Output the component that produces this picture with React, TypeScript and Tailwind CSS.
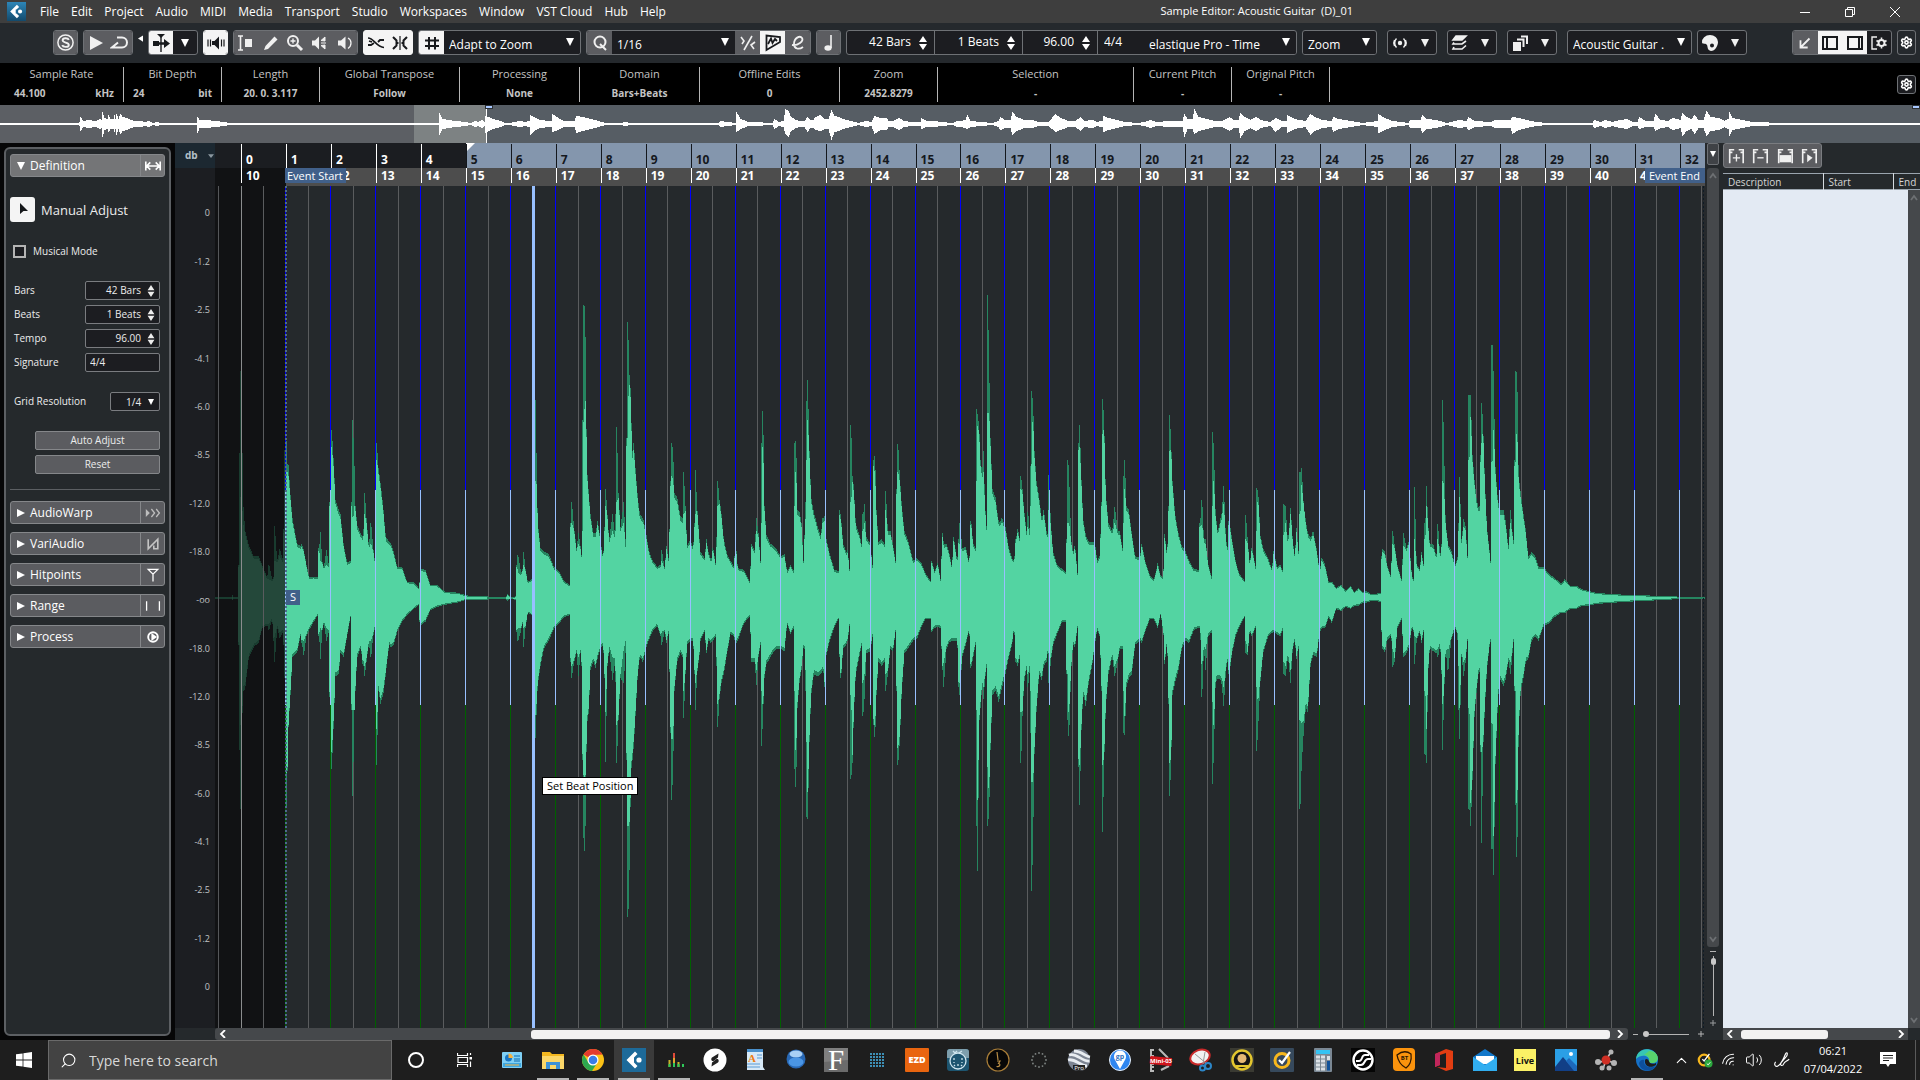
import React from "react";
import { Search, Wifi, Volume2, ChevronUp, Settings } from "lucide-react";

/* ------------------------------------------------------------------ */
/* Waveform data                                                       */
/* ------------------------------------------------------------------ */

type Segment = { origin: number; scale: number; data: string };

/* Each entry: column,top,bottom[,innerTop,innerBottom]; the axis sits at 779. */
const AXIS = 779;
const Y_SCALE = 2.376;

const segments: Segment[] = [
  {
    origin: -15,
    scale: 3,
    data: `45,777,781 94,777,781 96,773,784 98,777,781 115,777,781 116,700,890 118,435,1140,700,890 122,240,1280,540,1080 125,375,1080,560,1060 128,550,1000,600,990 134,620,995
145,655,920 160,680,895 175,680,885 185,700,850 200,730,845 206,700,855,735,840 215,735,830 220,730,880 223,608,930,690,870 230,690,850 238,662,875,680,860 248,690,860 251,615,890
254,428,970,620,890 257,388,1300,480,1200 261,460,1190,480,1180 264,462,1085,490,1080 270,535,1010 276,590,920 290,650,908 300,655,870 304,650,885 310,665,915,670,880 318,700,870 326,730,855 340,728,835 352,730,820
356,660,870 360,622,925,690,850 365,690,860 370,705,840 378,665,880,700,850 385,700,860 388,550,1015 394,380,1185,420,1145 400,460,1070 405,545,965 415,570,960 420,580,910 430,655,918 440,695,870 450,690,825
454,550,1045 457,355,1250,600,1045 462,465,1045,560,1045 465,560,1000 470,605,920 480,625,900 488,635,935 493,530,965,580,940 498,590,930 505,655,890 512,600,920,650,880 518,660,870 523,690,850
525,555,1060 529,410,1175,450,1090 534,470,1000 540,505,1030 548,560,1010 556,635,960 566,645,890 572,650,895 580,670,890 590,705,860 605,705,835 620,740,820 640,742,805 655,755,795 659,740,835 661,710,845
675,712,835 690,748,808 710,748,800 735,765,795 770,766,790 800,773,783 860,775,783 865,777,781 915,776,782 922,770,785 930,777,781 948,775,784 950,700,860 953,677,882,720,850 962,720,855 966,710,840
970,670,895,700,850 975,710,850 982,740,815 995,735,820 1000,735,820 1003,400,1000,600,900 1006,308,1112,500,1056 1009,498,1030 1012,600,985 1020,660,940 1030,668,900 1045,675,880 1060,705,852 1075,715,840 1090,738,825 1107,748,820
1110,600,930 1114,550,968,600,940 1120,605,935 1128,660,910 1134,625,965,650,920 1140,655,910 1145,690,940 1148,355,1165,620,1150 1151,82,1349,360,1200 1154,95,1380,330,1205 1157,290,1205 1159,465,1083 1165,530,1050 1170,580,950 1178,625,930 1185,625,945
1192,597,920 1200,640,900 1208,685,890 1212,610,970 1216,520,1168,560,1050 1220,570,950 1226,640,900 1236,580,975,620,920 1244,630,930 1249,372,1172,550,1080 1254,530,1070 1260,610,970 1270,550,980,600,900 1277,675,880
1280,400,1165 1283,124,1538,400,1320 1286,250,1478,300,1320 1289,250,1320 1292,340,1190 1296,430,1165 1300,410,1130 1305,470,1060 1312,540,960 1318,580,920 1328,590,930 1336,620,900 1345,665,880 1355,688,860 1370,705,845 1380,700,870
1384,665,890,690,860 1392,705,860 1399,655,885 1405,690,860 1410,500,1100 1414,410,1258,490,1115 1418,430,1190,500,1115 1422,530,1000 1430,540,930 1440,585,910 1446,590,920 1450,480,1065,580,1000 1455,560,960 1460,655,890 1470,640,880 1478,660,880 1482,600,960 1485,475,1045,580,980 1490,560,960 1497,640,915`,
  },
  {
    origin: 465,
    scale: 3,
    data: `22,665,880 30,625,880 38,690,865 42,510,1045,620,960 46,472,1010,545,960 52,635,920 60,670,880 72,683,860 78,640,910 84,670,880 92,690,885 98,660,880 106,700,870 112,500,1085,560,1030 117,545,1020 122,570,985 130,640,960
140,675,910 150,690,865 160,705,870 165,638,890 172,708,880 190,712,840 208,740,822 213,650,930 222,665,930 228,590,985,620,950 234,625,920 240,690,890 244,410,1130,600,1000 248,335,1050,420,1030 252,560,970 258,630,935
270,650,920 280,655,905 290,665,900 300,680,900 312,675,905 320,715,840 330,700,865 340,715,850 344,410,1185,560,1000 347,405,1228,480,1140 351,570,1040 357,575,980 363,600,950 370,705,890 374,630,900 378,310,1300,450,1120
382,262,1305,355,1240 387,430,1120 392,540,1010 400,575,960 412,610,965 420,630,960 428,590,950 433,585,990 438,640,915 448,675,880 462,712,848 474,715,830 478,570,920 482,590,968 488,650,900 497,670,890 502,665,880 508,720,840
512,367,1210,550,1010 516,490,1170 520,515,1060 526,605,960 536,625,920 544,655,890 548,580,1060,620,980 552,555,1020,600,960 558,635,910 570,650,905 577,710,865 580,450,1080 584,442,1110,490,1080 588,570,1010 594,645,930 604,640,940
612,650,930 616,525,1000,570,960 622,620,960 630,620,900 638,655,905 645,690,860 649,520,1000 653,412,1175,480,1135 658,490,1120 664,560,1000 672,620,910 682,640,900 690,665,890 698,690,880 710,685,875 722,695,850 735,720,830 750,738,830
754,690,860 762,715,850 772,695,848 780,735,850 786,625,950 790,650,990,660,930 798,650,900 806,670,885 814,705,880 820,635,880 830,690,880 836,640,990 839,600,1010,655,980 845,660,920 856,658,890 866,695,855 872,595,945 878,650,920 885,660,890
888,330,1320,500,1045 892,345,1428,370,1260 896,370,1080 900,450,1040 905,480,990 909,430,1020,480,990 914,560,970 919,620,940 922,58,1320,340,1180 926,225,1290,340,1230 930,400,1140 936,520,1010 945,540,1000 955,600,1025 965,590,990
975,610,960 985,660,920 995,685,890 1001,690,850 1006,640,930 1012,615,940 1018,640,920 1022,490,1170,520,1050 1026,520,1060 1031,570,980 1038,620,950 1043,575,990,610,960 1049,630,940 1051,465,1100,560,1000 1054,288,1475,460,1215
1058,320,1350,360,1215 1062,430,1150 1068,500,1050 1076,540,960 1084,590,975 1090,570,940 1098,620,930 1103,630,900 1106,487,980,570,910 1111,600,930 1118,670,890 1130,700,865 1145,710,835 1158,720,835 1160,640,960 1163,450,1070,600,960
1166,490,1108,600,1050 1172,640,950 1178,670,890 1184,655,895 1191,720,850 1195,410,1180 1198,367,1270,420,1175 1202,480,1110 1208,590,1010 1216,630,1035 1225,645,980 1235,645,940 1243,645,890 1250,690,855 1258,680,870 1263,550,1000
1267,305,1335,390,1175 1271,360,1170 1276,530,1040 1284,600,960 1295,620,920 1303,563,965,600,940 1312,620,930 1318,620,900 1326,660,900 1330,490,1100,600,1000 1333,450,1105,520,1060 1338,560,990 1345,570,970 1354,625,960 1364,680,890 1378,683,880
1384,650,885 1394,690,860 1408,725,830 1420,735,830 1432,697,850 1440,725,820 1448,730,850 1453,628,935 1460,680,880 1464,560,1030 1468,345,1250,430,1170 1472,410,1175 1476,500,1010 1484,580,980 1494,625,950 1504,655,900 1514,665,880 1526,690,885 1540,710,855 1555,712,850`,
  },
  {
    origin: 965,
    scale: 2.904,
    data: `57,600,850 63,545,1015,605,935 68,640,900 73,640,950,650,900 80,695,870 90,730,860 93,385,1220,560,1025 97,420,1150,500,1080 102,580,980 108,620,970 118,590,975 126,512,1035,555,990 132,640,950 138,665,925 142,595,960 150,640,910
160,690,870 170,720,850 186,738,825 190,582,910,640,880 195,640,915 201,695,860 208,660,870 218,705,850 222,518,1142,620,990 226,530,1080,550,1020 232,630,980 240,660,910 255,685,870 265,710,862 272,668,860 280,705,865 290,700,870 297,715,855
301,556,960,630,930 305,560,965,600,940 312,645,920 320,565,980,580,950 326,640,900 332,680,880 337,612,925 345,690,890 348,480,1280,580,1070 352,470,1175,510,1075 358,560,1095,560,1070 364,595,1040 370,625,1050 378,635,935 386,622,915
396,665,918 404,715,860 411,685,850 420,700,850 430,740,825 440,740,838 452,755,805 466,747,810 480,762,800 494,750,805 505,765,798 518,755,797 530,765,790 540,763,790 555,770,786 582,767,788 585,680,860 588,663,900 594,670,908 600,700,880
610,725,870 613,690,880 617,620,942,650,900 622,655,930 630,700,850 642,735,830 648,625,920,655,910 656,660,910 664,645,895 672,725,850 677,735,860 680,515,937,640,870 686,700,880 695,710,860 700,670,885 708,710,850 711,600,1150,640,1000
715,513,1170,560,1090 719,600,960 724,650,900 734,652,905 743,680,910 748,603,920,640,900 754,680,890 758,650,960 762,308,1140,500,1030 765,400,1020,510,1000 770,600,910 778,655,950,660,900 786,665,880 797,700,850 804,690,860
808,600,1045,620,940 811,492,1115,540,1040 816,640,920 823,592,965,610,930 828,610,930 836,710,860 839,297,1280,450,1040 843,297,1320,350,1265 848,440,1210 854,500,1055 860,545,1000 868,570,940 872,440,1145 875,315,1360,410,1145 879,370,1140
884,500,1040 890,610,950 898,670,890 904,725,870 906,178,1375,455,1075 910,262,1437,380,1345 914,460,1190 920,530,1060 926,570,970 938,570,988 945,600,970 952,660,930 959,570,960,600,930 965,630,900 970,660,860 972,450,1000
975,240,1270,455,1000 978,250,1395,390,1265 982,490,1100 988,530,1000 996,580,970 1003,620,930 1010,680,925 1020,670,880 1030,680,870 1040,705,880 1055,705,845 1070,722,840 1085,730,825 1105,745,815 1117,735,815 1132,750,805 1150,750,805
1165,758,798 1185,762,797 1210,767,793 1260,770,790 1320,772,787 1400,774,784 1440,775,782 1452,777,781 1523,777,781`,
  },
];

const CENTER = 412;

const columns = segments.flatMap((s) =>
  s.data.split(/\s+/).map((entry) => {
    const [c, top, bottom, it, ib] = entry.split(",").map(Number);
    const up = (AXIS - top) / Y_SCALE;
    const down = (bottom - AXIS) / Y_SCALE;
    return {
      x: s.origin + c / s.scale,
      up,
      down,
      innerUp: it ? (AXIS - it) / Y_SCALE : Math.max(0, up * 0.96 - 1),
      innerDown: ib ? (ib - AXIS) / Y_SCALE : Math.max(0, down * 0.96 - 1),
    };
  }),
);

type Peak = { x: number; a: number; b: number };

/* Resamples the envelope to one stepped column per unit, keeping every peak. */
const toPath = (pts: Peak[], mid: number) => {
  const first = Math.floor(pts[0].x);
  const last = Math.floor(pts[pts.length - 1].x);
  const cols: Peak[] = [];
  let i = 0;
  for (let x = first; x <= last; x++) {
    while (i < pts.length - 2 && pts[i + 1].x < x) i++;
    const p = pts[i];
    const q = pts[i + 1];
    const t = Math.min(1, Math.max(0, (x - p.x) / (q.x - p.x || 1)));
    let a = p.a + (q.a - p.a) * t;
    let b = p.b + (q.b - p.b) * t;
    for (let k = i; k < pts.length && pts[k].x < x + 1; k++) {
      if (pts[k].x >= x) {
        a = Math.max(a, pts[k].a);
        b = Math.max(b, pts[k].b);
      }
    }
    cols.push({ x, a: Math.round(a), b: Math.round(b) });
  }
  return (
    `M${first} ${mid}` +
    cols.map((c) => `V${mid - c.a}H${c.x + 1}`).join("") +
    [...cols].reverse().map((c) => `V${mid + c.b}H${c.x}`).join("") +
    "Z"
  );
};

const outerPath = toPath(columns.map((c) => ({ x: c.x, a: c.up, b: c.down })), CENTER);
const innerPath = toPath(columns.map((c) => ({ x: c.x, a: c.innerUp, b: c.innerDown })), CENTER);

const overviewData = `0,1 78,1 79,2 80,7,7 83,3 88,4 95,3 100,5 101,4 102,12,13 104,6 107,5 108,9,8 110,5 113,5 114,9,8 115,5 116,10,11 118,5 120,10,10 122,7 126,6 130,4 134,3 140,3 145,2 149,3 152,1 157,2 160,1
196,1 197,7,9 199,4 206,4 215,3 224,2 228,1 438,1 439,11,11 442,5 448,4 455,3 465,2 470,1 475,3 478,2 482,4 484,2 485,8,9 488,7 492,5 500,3 505,1 510,1 513,2 520,3 524,2 529,3 530,9,11 535,6 540,4 548,3 551,3 552,10,8 558,6 563,3
568,3 574,3 576,8,9 582,7 590,5 598,3 605,1 621,1 625,2 630,1 718,1 720,3 727,2 735,1 736,12,8 740,5 748,2 760,2 765,1 772,1 774,5 778,2 783,3 785,15,10 788,13,13 790,8 795,4 800,3 804,3 807,7,8 810,4 813,4 815,7,6 820,9,7 824,5
828,5 831,14,16 834,8 838,7 843,5 850,3 858,1 865,3 871,2 874,8,10 880,6 886,6 888,3 893,3 899,6 903,3 912,2 920,2 921,6,5 926,3 934,3 940,2 953,1 956,3 960,3 965,4 967,9,5 970,3 980,2 992,1 998,3 1000,7,6 1004,4 1010,4 1012,12,11
1016,7 1024,4 1032,4 1038,2 1048,2 1055,10,8 1060,6 1068,3 1075,3 1080,7,7 1084,3 1092,4 1096,2 1102,3 1103,8,8 1108,6 1116,4 1124,2 1138,1 1148,3 1150,4 1156,2 1170,3 1182,3 1184,10,13 1187,5 1192,5 1194,15,10 1198,7 1206,5 1214,3
1222,3 1229,7 1233,4 1238,4 1240,11,14 1244,7 1250,4 1256,7 1260,4 1270,2 1275,6,8 1281,3 1286,3 1287,9,9 1294,5 1305,3 1310,10,11 1314,7 1322,4 1331,3 1333,7,8 1338,5 1350,3 1362,1 1377,3 1378,10,9 1382,7 1392,3 1400,2 1408,1 1410,4
1420,4 1422,9,9 1426,5 1436,4 1446,1 1455,3 1458,4 1466,3 1468,7,6 1474,3 1490,2 1495,4 1500,4 1510,4 1512,7,10 1518,6 1530,3 1545,1 1592,1 1594,4 1600,2 1605,4 1612,2 1620,4 1627,5 1632,2 1637,2 1639,7,5 1645,3 1653,3 1655,10,7 1660,4
1668,3 1672,6,6 1680,4 1682,11,12 1686,7 1691,5 1694,9,10 1698,4 1703,4 1706,13,12 1710,7 1718,6 1724,3 1728,5 1729,12,12 1732,6 1742,4 1752,2 1765,2 1772,1 1920,1`;

const overviewPath = toPath(
  overviewData.split(/\s+/).map((e) => {
    const [x, a, b] = e.split(",").map(Number);
    return { x, a, b: b ?? a };
  }),
  19,
);

const barX = (n: number) => Math.floor(25.98 + 44.94 * n);
const bars = Array.from({ length: 32 }, (_, i) => i + 1);

/* ------------------------------------------------------------------ */
/* Small shared parts                                                  */
/* ------------------------------------------------------------------ */

const Down = ({ className = "" }: { className?: string }) => (
  <svg viewBox="0 0 8 8" className={`h-2 w-2 shrink-0 fill-current ${className}`} aria-hidden="true">
    <path d="M0 0H8L4 8Z" />
  </svg>
);

const Spin = ({ small = false }: { small?: boolean }) => (
  <svg viewBox="0 0 8 14" className={small ? "h-3 w-2 shrink-0 fill-current" : "h-[14px] w-2 shrink-0 fill-current"} aria-hidden="true">
    <path d="M4 0L8 6H0ZM0 8H8L4 14Z" />
  </svg>
);

const Ico = ({ children, className = "h-5 w-5", box = "0 0 20 20" }: { children: React.ReactNode; className?: string; box?: string }) => (
  <svg viewBox={box} className={`shrink-0 ${className}`} fill="none" stroke="currentColor" strokeWidth="1.6" aria-hidden="true">
    {children}
  </svg>
);

const ToolButton = ({ label, on = false, children }: { label: string; on?: boolean; children: React.ReactNode }) => (
  <button
    aria-label={label}
    className={on ? "flex h-full w-[25px] min-w-0 items-center justify-center bg-[#f4f4f4] text-[#17191c]" : "flex h-full w-[25px] min-w-0 items-center justify-center bg-[#5c5d61] text-[#f0f0f0]"}
  >
    {children}
  </button>
);

const group = "flex h-[25px] shrink-0 overflow-hidden rounded-[3px] border border-[#6e7175] bg-[#1c1d21]";
const groupOn = "flex h-[25px] shrink-0 overflow-hidden rounded-[3px] border border-[#f4f4f4] bg-[#f4f4f4]";

const Pick = ({ label, value, className = "" }: { label: string; value: string; className?: string }) => (
  <div className={`relative h-full ${className}`}>
    <select aria-label={label} className="h-full w-full appearance-none bg-[#1c1d21] pb-[2px] pl-[5px] pr-5 text-[12px] text-white outline-none">
      <option>{value}</option>
    </select>
    <Down className="pointer-events-none absolute right-[6px] top-[7px] text-white" />
  </div>
);

const IconMenu = ({ label, children }: { label: string; children: React.ReactNode }) => (
  <button aria-label={label} className="flex h-[25px] w-[50px] shrink-0 items-center justify-between rounded-[3px] border border-[#6e7175] bg-[#1c1d21] pl-[2px] pr-[7px] text-[#f0f0f0]">
    {children}
    <Down />
  </button>
);

const BarField = ({ label, value, className }: { label: string; value: string; className: string }) => (
  <div className={`flex h-full items-center border-r border-[#6e7175] pr-[7px] text-white ${className}`}>
    <input aria-label={label} defaultValue={value} className="h-full w-full min-w-0 bg-transparent pb-[2px] pr-2 text-right text-[12px] outline-none" />
    <Spin />
  </div>
);

/* ------------------------------------------------------------------ */
/* Title bar and toolbar                                               */
/* ------------------------------------------------------------------ */

const CubaseLogo = ({ className }: { className: string }) => (
  <svg viewBox="0 0 24 24" className={className} aria-hidden="true">
    <defs>
      <linearGradient id="cb" x1="0" y1="0" x2="0" y2="1">
        <stop offset="0" stopColor="#2d86b8" />
        <stop offset="1" stopColor="#134a6c" />
      </linearGradient>
    </defs>
    <rect width="24" height="24" fill="url(#cb)" />
    <path d="M12.500 3.500L4 12l8.500 8.500 2.800-2.800L12 14.500V9.500L15.300 6.300Z" fill="#fff" />
    <rect x="11" y="9.500" width="3" height="5" fill="#1f6a97" />
    <circle cx="16.500" cy="12" r="2.600" fill="#fff" />
  </svg>
);

const menus = ["File", "Edit", "Project", "Audio", "MIDI", "Media", "Transport", "Studio", "Workspaces", "Window", "VST Cloud", "Hub", "Help"];

const TitleBar = () => (
  <header className="flex h-[23px] items-center bg-[#3e3e3e] text-[12px] text-white">
    <CubaseLogo className="ml-[7px] h-[19px] w-[19px]" />
    <nav className="ml-[14px] flex gap-3">
      {menus.map((m) => (
        <button key={m} className="leading-[23px]">{m}</button>
      ))}
    </nav>
    <h1 className="ml-auto mr-[447px] whitespace-pre text-[11px]">Sample Editor: Acoustic Guitar  (D)_01</h1>
    <div className="flex gap-[35px] pr-5">
      <button aria-label="Minimize">
        <Ico className="h-[10px] w-[10px]" box="0 0 10 10"><path d="M0 5.500H10" strokeWidth="1" /></Ico>
      </button>
      <button aria-label="Restore">
        <Ico className="h-[10px] w-[10px]" box="0 0 10 10"><path d="M.5 2.500H7.500V9.500H.5ZM2.500 2.500V.5H9.500V7.500H7.500" strokeWidth="1" /></Ico>
      </button>
      <button aria-label="Close">
        <Ico className="h-[10px] w-[10px]" box="0 0 10 10"><path d="M0 0L10 10M10 0L0 10" strokeWidth="1" /></Ico>
      </button>
    </div>
  </header>
);

const Toolbar = () => (
  <div className="flex h-10 items-start gap-[5px] bg-[#25292d] pl-[53px] pr-1 pt-[7px]">
    <div className={`${group} w-[25px]`}>
      <ToolButton label="Solo editor">
        <Ico className="h-[19px] w-[19px]">
          <circle cx="10" cy="10" r="8" />
          <path d="M13.500 7.300C12.500 4.900 7 5 7 7.700C7 10.600 13.500 9.500 13.500 12.500C13.500 15.200 7.500 15.300 6.500 12.800" strokeWidth="2" />
        </Ico>
      </ToolButton>
    </div>
    <div className={`${group} w-[50px]`}>
      <ToolButton label="Audition"><Ico><path d="M4 3L17 10L4 17Z" fill="currentColor" stroke="none" /></Ico></ToolButton>
      <ToolButton label="Audition loop"><Ico><path d="M7 4.500H12A5 5 0 0 1 12 14.500H2L8 9.500" strokeWidth="2" /></Ico></ToolButton>
    </div>
    <svg viewBox="0 0 8 10" className="mt-1 h-[9px] w-[5px] fill-white" aria-hidden="true"><path d="M8 0V10L0 5Z" /></svg>
    <div className={`${group} w-[50px]`}>
      <ToolButton label="Auto-scroll" on>
        <Ico><path d="M10 1V19" strokeWidth="1.400" /><path d="M6 1H14L10 5ZM13 6L19 10.500L13 15ZM2 8H8V13H2Z" fill="currentColor" stroke="none" /><path d="M8 10.500H13" strokeWidth="2.500" /></Ico>
      </ToolButton>
      <button aria-label="Auto-scroll options" className="flex w-6 items-center justify-center text-white"><Down /></button>
    </div>
    <div className={`${groupOn} w-[25px]`}>
      <ToolButton label="Acoustic feedback" on>
        <Ico><path d="M2 6.500V13.500M4.500 6.500V13.500M15.500 6.500V13.500M18 6.500V13.500" strokeWidth="1.200" /><path d="M6 8H8.500L13 3.500V16.500L8.500 12H6Z" fill="currentColor" stroke="none" /></Ico>
      </ToolButton>
    </div>
    <div className={`${group} w-[125px]`}>
      <ToolButton label="Range selection"><Ico><path d="M2 3H7M4.500 3V17M2 17H7" /><path d="M9 6H16V14H9Z" fill="currentColor" stroke="none" /></Ico></ToolButton>
      <ToolButton label="Draw"><Ico><path d="M3 17L4.500 13L13.500 3.500L16.500 6.500L7 16Z" fill="currentColor" stroke="none" /></Ico></ToolButton>
      <ToolButton label="Zoom tool"><Ico><circle cx="8" cy="8" r="5" strokeWidth="2" /><path d="M8 5.500V10.500M5.500 8H10.500" strokeWidth="1.400" /><path d="M12 12L17 17" strokeWidth="3" /></Ico></ToolButton>
      <ToolButton label="Scrub"><Ico><path d="M2 7.500H5L9 3.500V16.500L5 12.500H2Z" fill="currentColor" stroke="none" /><path d="M11 10H16M15 4L11 7.500L15 8ZM15 12L11 12.500L15 16Z" fill="currentColor" strokeWidth="1" /></Ico></ToolButton>
      <ToolButton label="Play tool"><Ico><path d="M3 7.500H6L10.500 3.500V16.500L6 12.500H3Z" fill="currentColor" stroke="none" /><path d="M13 5C17 7 17 13 13 15.500" strokeWidth="1.300" /></Ico></ToolButton>
    </div>
    <div className={`${groupOn} w-[50px]`}>
      <ToolButton label="Snap to zero crossing" on><Ico><path d="M2 5C8 5 10 14 18 14.500" strokeWidth="1.600" /><path d="M2 12H5L8 10M12 9L14 7H18M3 8L6 9" strokeWidth="1.800" /></Ico></ToolButton>
      <ToolButton label="Snap" on><Ico><path d="M10 3V17" strokeWidth="1.200" /><path d="M3 4L6.500 7.500V12.500L3 16M17 4L13.500 7.500V12.500L17 16M6 10H8.500M11.500 10H14" strokeWidth="2" /></Ico></ToolButton>
    </div>
    <div className={`${group} w-[163px]`}>
      <ToolButton label="Grid" on><Ico><path d="M7 4V16.500M13 4V16.500M3 7.500H17M3 13H17" strokeWidth="2" /></Ico></ToolButton>
      <Pick label="Grid type" value="Adapt to Zoom" className="flex-1" />
    </div>
    <div className={`${group} w-[225px]`}>
      <ToolButton label="Apply quantize"><Ico><circle cx="10" cy="9" r="5.500" strokeWidth="2" /><path d="M10 11L16 17" strokeWidth="2" /></Ico></ToolButton>
      <Pick label="Quantize preset" value="1/16" className="flex-1" />
      <ToolButton label="Iterative quantize"><Ico><path d="M14 3L6 17" /><path d="M3 4L6 8L4 11M17 9L13 12L16 16" /></Ico></ToolButton>
      <ToolButton label="Audio warp quantize" on><Ico><path d="M3.500 2.500V17L17 9V4Z" strokeWidth="1.800" /><path d="M5 11L8 5.500L9.500 10L12 6L14 8" strokeWidth="1.800" /></Ico></ToolButton>
      <ToolButton label="Quantize panel"><Ico><path d="M4 12C10 13 16 8 14 5C12 2 6 5 6 11C6 16 11 17 15 14" strokeWidth="1.800" /></Ico></ToolButton>
    </div>
    <div className={`${group} w-[25px]`}>
      <ToolButton label="Musical mode"><Ico><path d="M12 2V15" /><ellipse cx="9" cy="15" rx="3.600" ry="2.800" fill="currentColor" stroke="none" /></Ico></ToolButton>
    </div>
    <div className={`${group} w-[451px]`}>
      <BarField label="Length in bars" value="42 Bars" className="w-[88px]" />
      <BarField label="Length in beats" value="1 Beats" className="w-[88px]" />
      <BarField label="Tempo" value="96.00" className="w-[75px]" />
      <input aria-label="Time signature" defaultValue="4/4" className="w-[46px] bg-transparent px-[6px] pb-[2px] text-[12px] text-white outline-none" />
      <Pick label="Algorithm" value="elastique Pro - Time" className="flex-1" />
    </div>
    <div className={`${group} w-[75px]`}><Pick label="Zoom preset" value="Zoom" className="flex-1" /></div>
    <span className="w-0" />
    <IconMenu label="View options"><Ico><path d="M6.500 5.500A6.500 6.500 0 0 0 6.500 14.500M13.500 5.500A6.500 6.500 0 0 1 13.500 14.500M4.500 7A6.500 6.500 0 0 0 4.500 13M15.500 7A6.500 6.500 0 0 1 15.500 13" strokeWidth="1.400" /><circle cx="10" cy="10" r="2.200" fill="currentColor" stroke="none" /></Ico></IconMenu>
    <span className="w-0" />
    <IconMenu label="Layers"><Ico><path d="M6 3H16L12 7H3Z" fill="currentColor" /><path d="M4 9.500L3 11H12L16 8M4 14L3 16H12L16 12.500" /></Ico></IconMenu>
    <span className="w-0" />
    <IconMenu label="Versions"><Ico><path d="M3 9H11V18H3Z" fill="currentColor" stroke="none" /><path d="M7 6.500H13.500V14M11 3.500H17V11" strokeWidth="2" /></Ico></IconMenu>
    <span className="w-0" />
    <div className={`${group} w-[125px]`}><Pick label="Active clip" value="Acoustic Guitar ." className="flex-1" /></div>
    <IconMenu label="Colors"><Ico><path d="M10 2A8 7 0 0 0 2 9.500C3 12 6 10 7 12C8 14 7 17 11 18C15 18 18 13 18 9A8 7 0 0 0 10 2ZM12 10.500A2 2 0 1 1 12 14.500A2 2 0 0 1 12 10.500Z" fill="currentColor" stroke="none" fillRule="evenodd" /></Ico></IconMenu>
    <div className={`${group} ml-auto w-[100px]`}>
      <ToolButton label="Open in lower zone"><Ico className="h-[18px] w-[18px]"><path d="M15 5L5 15M5 7V15H13" strokeWidth="2" /></Ico></ToolButton>
      <ToolButton label="Left zone" on><Ico><path d="M3 4H17V16H3ZM7 4V16" strokeWidth="2" /></Ico></ToolButton>
      <ToolButton label="Right zone" on><Ico><path d="M3 4H17V16H3ZM14 4V16" strokeWidth="2" /></Ico></ToolButton>
      <button aria-label="Window layout" className="flex w-6 items-center justify-center text-[#f0f0f0]"><Ico><path d="M8 4H3V16H8" strokeWidth="1.400" /><circle cx="12.500" cy="10" r="3" strokeWidth="2" /><path d="M12.500 4.500V6M12.500 14V15.500M7.500 7.500L9 8.500M16 11.500L17.500 12.500M7.500 12.500L9 11.500M16 8.500L17.500 7.500" /></Ico></button>
    </div>
    <button aria-label="Toolbar setup" className="flex h-[25px] w-[19px] items-center justify-center rounded-[3px] border border-[#6e7175] text-white"><Settings size={13} strokeWidth={3} /></button>
  </div>
);

/* ------------------------------------------------------------------ */
/* Info line and overview                                              */
/* ------------------------------------------------------------------ */

const info: { label: string; value: React.ReactNode; w: string }[] = [
  { label: "Sample Rate", value: <span className="flex w-full justify-between pl-[14px] pr-[9px]"><span>44.100</span><span>kHz</span></span>, w: "w-[124px]" },
  { label: "Bit Depth", value: <span className="flex w-full justify-between px-[9px]"><span>24</span><span>bit</span></span>, w: "w-[98px]" },
  { label: "Length", value: "20. 0. 3.117", w: "w-[98px]" },
  { label: "Global Transpose", value: "Follow", w: "w-[140px]" },
  { label: "Processing", value: "None", w: "w-[120px]" },
  { label: "Domain", value: "Bars+Beats", w: "w-[120px]" },
  { label: "Offline Edits", value: "0", w: "w-[140px]" },
  { label: "Zoom", value: "2452.8279", w: "w-[98px]" },
  { label: "Selection", value: "-", w: "w-[196px]" },
  { label: "Current Pitch", value: "-", w: "w-[98px]" },
  { label: "Original Pitch", value: "-", w: "w-[98px]" },
];

const InfoLine = () => (
  <div className="flex h-[42px] items-center bg-black pr-1">
    {info.map((i) => (
      <div key={i.label} className={`flex h-[35px] shrink-0 flex-col items-center border-r border-[#b5b5b5] text-[#c4c4c4] ${i.w}`}>
        <span className="text-[11px] leading-[14px]">{i.label}</span>
        <span className="mt-1 flex w-full justify-center text-[10px] font-bold leading-4">{i.value}</span>
      </div>
    ))}
    <button aria-label="Info line setup" className="ml-auto flex h-[19px] w-[19px] items-center justify-center rounded-[3px] border border-[#6e7175] bg-[#1c1d21] text-white"><Settings size={13} strokeWidth={3} /></button>
  </div>
);

const Overview = () => (
  <svg viewBox="0 0 1920 38" preserveAspectRatio="none" className="h-[38px] w-full" shapeRendering="crispEdges" role="img" aria-label="Overview">
    <rect width="1920" height="38" fill="#5c5f64" />
    <rect x="486" width="1434" height="38" fill="#565d64" />
    <rect x="414" width="72" height="38" fill="#7d8283" />
    <path d={overviewPath} fill="#fff" />
    <rect x="486" y="3" width="1" height="35" fill="#fff" />
    <rect x="485" width="8" height="4" fill="#2b2f33" />
    <rect x="486" y="1" width="6" height="2" fill="#a9c8ff" />
    <rect x="1912" width="8" height="4" fill="#2b2f33" />
    <rect x="1913" y="1" width="6" height="2" fill="#a9c8ff" />
  </svg>
);

/* ------------------------------------------------------------------ */
/* Inspector                                                           */
/* ------------------------------------------------------------------ */

const Section = ({ title, open = false, icon }: { title: string; open?: boolean; icon: React.ReactNode }) => (
  <button aria-expanded={open} className={`flex h-[23px] items-center rounded-[3px] border border-[#85878a] pl-[6px] text-left text-[12px] text-white ${open ? "bg-[#747577]" : "bg-[#5b5c60]"}`}>
    <svg viewBox="0 0 8 8" className="h-2 w-2 fill-white" aria-hidden="true">{open ? <path d="M0 0H8L4 8Z" /> : <path d="M0 0L8 4L0 8Z" />}</svg>
    <span className="flex-1 pl-[5px]">{title}</span>
    <span className="flex h-full w-6 items-center justify-center border-l border-[#85878a]">{icon}</span>
  </button>
);

const Row = ({ id, label, value, spin = true }: { id: string; label: string; value: string; spin?: boolean }) => (
  <div className="flex h-[19px] items-center justify-between pl-1 pr-[5px]">
    <label htmlFor={id}>{label}</label>
    <span className="flex h-[19px] w-[75px] items-center rounded-[2px] border border-[#7a7c80] bg-[#1c1d21] px-[4px]">
      <input id={id} defaultValue={value} className={`w-full min-w-0 bg-transparent outline-none ${spin ? "pr-[6px] text-right" : "text-left"}`} />
      {spin && <Spin small />}
    </span>
  </div>
);

const Inspector = () => (
  <aside className="w-[175px] shrink-0 bg-[#060607] pb-1 pl-1 pr-1 pt-1">
    <div className="flex h-full flex-col rounded-[6px] border-2 border-[#5c5f63] bg-[#25292c] px-1 pt-[5px] text-[10px] text-[#ececec]">
      <Section title="Definition" open icon={<Ico className="h-[18px] w-[18px]"><path d="M2 5V15M18 5V15M3 10H17M7 6L3 10L7 14M13 6L17 10L13 14" strokeWidth="1.800" /></Ico>} />
      <div className="mt-5 flex items-center gap-[6px]">
        <button aria-label="Manual adjust tool" className="flex h-[25px] w-[25px] items-center justify-center rounded-[3px] bg-[#f4f4f4] text-[#15171a]">
          <Ico><path d="M7 3L15 11L10.500 11L7 14Z" fill="currentColor" stroke="none" /></Ico>
        </button>
        <span className="pt-[2px] text-[13px]">Manual Adjust</span>
      </div>
      <label className="mt-[22px] flex items-center gap-[7px] pl-[3px]">
        <input type="checkbox" className="h-[13px] w-[13px] appearance-none border-2 border-[#b4b4b4] bg-[#1c1d21]" />
        Musical Mode
      </label>
      <div className="mt-[22px] flex flex-col gap-[5px]">
        <Row id="bars" label="Bars" value="42 Bars" />
        <Row id="beats" label="Beats" value="1 Beats" />
        <Row id="tempo" label="Tempo" value="96.00" />
        <Row id="sig" label="Signature" value="4/4" spin={false} />
      </div>
      <div className="mt-5 flex h-[19px] items-center justify-between pl-1 pr-[5px]">
        <label htmlFor="gridres">Grid Resolution</label>
        <span className="relative h-[19px] w-[50px]">
          <select id="gridres" className="h-full w-full appearance-none rounded-[2px] border border-[#7a7c80] bg-[#1c1d21] pl-[15px] text-[10px] leading-4 outline-none"><option>1/4</option></select>
          <svg viewBox="0 0 8 8" className="pointer-events-none absolute right-[6px] top-[7px] h-[6px] w-[6px] fill-white"><path d="M0 0H8L4 8Z" /></svg>
        </span>
      </div>
      <button className="ml-[25px] mr-[5px] mt-5 h-[19px] rounded-[2px] border border-[#85878a] bg-[#5b5c60]">Auto Adjust</button>
      <button className="ml-[25px] mr-[5px] mt-[5px] h-[19px] rounded-[2px] border border-[#85878a] bg-[#5b5c60]">Reset</button>
      <hr className="mb-[11px] mr-[5px] mt-[15px] border-[#5c5f63]" />
      <div className="flex flex-col gap-2">
        <Section title="AudioWarp" icon={<Ico className="h-4 w-4 text-[#bdbdbd]"><path d="M1 5L6 10L1 15Z" fill="currentColor" stroke="none" /><path d="M8 5L12 10L8 15M14 5L18 10L14 15" /></Ico>} />
        <Section title="VariAudio" icon={<Ico className="h-4 w-4 text-[#c4c4c4]"><path d="M4 4V16L16 4V16H11V12" strokeWidth="2" /></Ico>} />
        <Section title="Hitpoints" icon={<Ico className="h-4 w-4"><path d="M4 3H16L10 9ZM10 9V18" strokeWidth="1.600" /></Ico>} />
        <Section title="Range" icon={<Ico className="h-4 w-4"><path d="M2 4V16M18 4V16" /></Ico>} />
        <Section title="Process" icon={<Ico className="h-4 w-4"><circle cx="10" cy="10" r="6" strokeWidth="2.400" /><path d="M8 5L15 10L8 15Z" fill="currentColor" stroke="none" /></Ico>} />
      </div>
    </div>
  </aside>
);

/* ------------------------------------------------------------------ */
/* Wave editor                                                         */
/* ------------------------------------------------------------------ */

const dbMarks = ["0", "-1.2", "-2.5", "-4.1", "-6.0", "-8.5", "-12.0", "-18.0", "-oo", "-18.0", "-12.0", "-8.5", "-6.0", "-4.1", "-2.5", "-1.2", "0"];

const DbScale = () => (
  <div className="flex w-10 shrink-0 flex-col bg-[#1c1e22]">
    <button className="flex h-[25px] items-center justify-between bg-[#1c2831] pl-[10px] pr-[1px] text-[10px] font-bold text-[#b4c0c8]">
      db
      <svg viewBox="0 0 8 5" className="h-[4px] w-[6px] fill-[#8b979f]" aria-hidden="true"><path d="M0 0H8L4 5Z" /></svg>
    </button>
    <ol className="flex flex-1 flex-col pb-[17px] pt-[21px] text-right text-[9px] text-[#c0c3c5]">
      {dbMarks.map((d, i) => (
        <li key={i} className="flex flex-1 items-center justify-end pr-[5px]">{d}</li>
      ))}
    </ol>
  </div>
);

const beatLabel = (n: number) => {
  if (n === 1 || n === 32) return "";
  return n === 31 ? "4" : n + 10;
};

const Rulers = () => (
  <div className="relative text-[12px] font-bold">
    <div className="flex h-[25px] bg-[#1b1d21] text-white">
      <span className="grow-[26] basis-0" />
      {Array.from({ length: 33 }, (_, n) => (
        <span
          key={n}
          className={`flex min-w-0 basis-0 items-end overflow-visible ${n === 32 ? "grow-[25]" : "grow-[45]"} ${n >= 5 ? "bg-[#8496ad] text-[#14181d]" : ""}`}
        >
          {n === 5 && <svg viewBox="0 0 10 10" className="mr-[-9px] h-[9px] w-[9px] self-start fill-white" aria-hidden="true"><path d="M0 0H10L0 10Z" /></svg>}
          <span className={`h-6 border-l pl-1 pt-[7px] leading-[17px] ${n >= 5 ? "border-[#14181d]" : "border-white"}`}>{n}</span>
        </span>
      ))}
    </div>
    <div className="flex h-[18px] text-white">
      <span className="grow-[26] basis-0 bg-[#111214]" />
      {Array.from({ length: 33 }, (_, n) => (
        <span key={n} className={`min-w-0 basis-0 ${n === 32 ? "grow-[25]" : "grow-[45]"} ${n ? "bg-[#4d4d4d]" : "bg-[#111214]"}`}>
          <span className="block h-[15px] border-l border-white pl-1 leading-[15px]">{beatLabel(n)}</span>
        </span>
      ))}
    </div>
    <span className="absolute bottom-[3px] left-[70px] h-[15px] w-[61px] whitespace-nowrap bg-[#41608a] pl-[2px] text-[11px] font-normal leading-[15px] text-white">Event Start</span>
    <span className="absolute bottom-[3px] right-0 h-[15px] w-[60px] whitespace-nowrap bg-[#41608a] pl-1 text-[11px] font-normal leading-[15px] text-white">Event End</span>
  </div>
);

const Wave = () => (
  <svg viewBox="0 0 1490 842" preserveAspectRatio="none" className="absolute inset-0 h-full w-full" shapeRendering="crispEdges" role="img" aria-label="Audio waveform">
    <defs>
      <clipPath id="before"><rect width="70" height="842" /></clipPath>
      <clipPath id="inside"><rect x="70" width="1420" height="842" /></clipPath>
    </defs>
    <rect width="1490" height="842" fill="#25292c" />
    <rect width="70" height="842" fill="#111214" />
    {bars.map((n) => (
      <rect key={n} x={barX(n + 0.5)} width="1" height="842" fill="#5a5c5e" />
    ))}
    <g clipPath="url(#before)">
      <path d={outerPath} fill="#193c2f" />
      <path d={innerPath} fill="#24483a" />
      <rect x="3" width="1" height="842" fill="#55575a" />
      <rect x="48" width="1" height="842" fill="#5a5c5e" />
      <rect x="26" width="1" height="842" fill="#8b8d8e" />
    </g>
    <g clipPath="url(#inside)">
      <path d={outerPath} fill="#268560" />
      <path d={innerPath} fill="#53d4a2" />
    </g>
    {bars.map((n) => (
      <g key={n}>
        <rect x={barX(n)} width="1" height="304" fill="#0000ff" />
        <rect x={barX(n)} y="304" width="1" height="215" fill="#98c0ff" />
        <rect x={barX(n)} y="519" width="1" height="323" fill="#006000" />
      </g>
    ))}
    <path d="M71.500 0V842" stroke="#4c6b8c" strokeWidth="1" strokeDasharray="2 2" />
    <path d="M70.500 0V842" stroke="#4c6b8c" strokeWidth="1" strokeDasharray="2 2" />
    <path d="M1488 0V842" stroke="#0f1b26" strokeDasharray="2 2" />
    <rect x="317" width="3" height="842" fill="#98c0ff" />
  </svg>
);

const Chevron = ({ d, className = "h-2 w-2" }: { d: string; className?: string }) => (
  <svg viewBox="0 0 8 8" className={className} fill="none" stroke="currentColor" strokeWidth="1.800" aria-hidden="true"><path d={d} /></svg>
);
const LEFT = "M6 0L2 4L6 8";
const RIGHT = "M2 0L6 4L2 8";

const Editor = () => (
  <main className="flex min-w-0 flex-1 flex-col">
    <div className="flex flex-1">
      <DbScale />
      <div className="flex min-w-0 flex-1 flex-col">
        <Rulers />
        <div className="relative flex-1">
          <Wave />
          <span className="absolute left-[71px] top-[404px] flex h-[15px] w-[14px] items-center justify-center bg-[#41608a] text-[11px] text-white">S</span>
          <span role="tooltip" className="absolute left-[327px] top-[591px] border border-black bg-white px-[4px] text-[11px] leading-4 text-black">Set Beat Position</span>
        </div>
      </div>
      <div className="flex w-[18px] flex-col items-center bg-[#25292c] pl-[2px] pr-1 text-[#9a9c9e]">
        <button aria-label="Ruler options" className="flex h-[22px] w-3 items-center justify-center rounded-[2px] border border-[#6e7175] bg-[#3f4246] text-white"><Down className="w-[6px]" /></button>
        <div className="mt-[3px] flex w-3 flex-1 flex-col items-center justify-between rounded-[3px] bg-[#45484b] py-1 text-[#6d7073]">
          <Chevron d="M1 6L4 2L7 6" />
          <Chevron d="M1 2L4 6L7 2" />
        </div>
        <div className="flex h-[81px] flex-col items-center pt-1">
          <span className="h-px w-[6px] bg-[#b4b4b4]" />
          <input type="range" aria-label="Vertical zoom" className="sr-only" />
          <span className="mt-1 flex h-[60px] w-[6px] flex-col items-center">
            <span className="h-[2px] w-px bg-[#b4b4b4]" />
            <span className="h-[7px] w-[5px] rounded-full bg-[#c9c9c9]" />
            <span className="w-px flex-1 bg-[#b4b4b4]" />
          </span>
          <Ico className="mt-1 h-[6px] w-[6px]" box="0 0 6 6"><path d="M3 0V6M0 3H6" strokeWidth="1" /></Ico>
        </div>
      </div>
    </div>
    <div className="flex h-3 bg-[#25292c]">
      <span className="w-10" />
      <div className="flex flex-1 items-center rounded-[3px] bg-[#45484b] px-[4px] text-white">
        <Chevron d={LEFT} />
        <span className="grow-[304] basis-0" />
        <span className="h-[9px] grow-[1080] basis-0 rounded-[3px] bg-[#f2f2f2]" />
        <span className="w-[6px]" />
        <Chevron d={RIGHT} />
      </div>
      <div className="flex w-[95px] items-center pl-[5px] text-[#b4b4b4]">
        <span className="h-px w-[5px] bg-current" />
        <input type="range" aria-label="Horizontal zoom" className="sr-only" />
        <span className="ml-[5px] h-[6px] w-[6px] rounded-full bg-[#c9c9c9]" />
        <span className="h-px w-10 bg-current" />
        <Ico className="ml-[9px] h-[6px] w-[6px]" box="0 0 6 6"><path d="M3 0V6M0 3H6" strokeWidth="1" /></Ico>
      </div>
    </div>
  </main>
);

/* ------------------------------------------------------------------ */
/* Region list                                                         */
/* ------------------------------------------------------------------ */

const regionFrame = "M3 18V3H8M13 3H18V18M3 6H6M15 6H18";

const Regions = () => (
  <aside className="flex w-[197px] shrink-0 flex-col bg-[#25292c]">
    <div className="flex h-[25px] w-[99px] items-center justify-around rounded-[3px] border border-[#7a7c80] bg-[#5c5d61] text-[#f0f0f0]">
      <button aria-label="Add region"><Ico className="h-[18px] w-[18px]"><path d={regionFrame} strokeWidth="1.800" /><path d="M10.500 8V16M6.500 12H14.500" strokeWidth="1.500" /></Ico></button>
      <button aria-label="Remove region"><Ico className="h-[18px] w-[18px]"><path d={regionFrame} strokeWidth="1.800" /><path d="M7 12H14" strokeWidth="1.500" /></Ico></button>
      <button aria-label="Select region"><Ico className="h-[18px] w-[18px]"><path d={regionFrame} strokeWidth="1.800" /><path d="M4 9H17V17H4Z" fill="currentColor" stroke="none" /></Ico></button>
      <button aria-label="Play region"><Ico className="h-[18px] w-[18px]"><path d={regionFrame} strokeWidth="1.800" /><path d="M8 8L14 12L8 17Z" fill="currentColor" stroke="none" /></Ico></button>
    </div>
    <table className="mt-[5px] w-full table-fixed text-left text-[10px] text-[#d5d5d5]">
      <thead>
        <tr className="h-4 border-y border-[#9aa4ae]">
          <th className="w-[100px] border-r border-[#d5dbe0] pl-[5px] font-normal leading-[14px]">Description</th>
          <th className="w-[70px] border-r border-[#d5dbe0] pl-[5px] font-normal leading-[14px]">Start</th>
          <th className="pl-[5px] font-normal leading-[14px]">End</th>
        </tr>
      </thead>
    </table>
    <div className="flex flex-1">
      <div className="flex-1 bg-[#e3eaf3]" />
      <div className="flex w-3 flex-col items-center justify-between bg-[#45484b] py-1 text-[#6d7073]">
        <Chevron d="M1 6L4 2L7 6" />
        <Chevron d="M1 2L4 6L7 2" />
      </div>
    </div>
    <div className="mr-3 flex h-3 items-center bg-[#45484b] px-[3px] text-white">
      <Chevron d={LEFT} />
      <span className="ml-[7px] h-[9px] w-[87px] rounded-[3px] bg-[#f2f2f2]" />
      <span className="flex-1" />
      <Chevron d={RIGHT} />
    </div>
  </aside>
);

/* ------------------------------------------------------------------ */
/* Taskbar                                                             */
/* ------------------------------------------------------------------ */

const dots = Array.from({ length: 12 }, (_, i) => (i * Math.PI) / 6);

const apps: { name: string; active?: boolean; running?: boolean; art: React.ReactNode }[] = [
  { name: "System monitor", art: <><rect x="2" y="4" width="20" height="16" rx="1" fill="#7fd0f5" /><path d="M3 15H21V19H3Z" fill="#3ea7e0" /><circle cx="8.500" cy="10" r="3.500" fill="#1674c4" /><path d="M8.500 10V5.500A4.500 4.500 0 0 1 13 10Z" fill="#f5b342" /><path d="M14 8H20M14 11H20M14 13H20" stroke="#0d68ac" strokeWidth="1.200" /><path d="M5 17H19" stroke="#f5b342" /></> },
  { name: "File Explorer", running: true, art: <><path d="M1 4H9L11 6H23V21H1Z" fill="#f3b71f" /><path d="M1 8H23V21H1Z" fill="#fbd769" /><path d="M5 21V14H19V21H15V17H9V21Z" fill="#3d92d8" /></> },
  { name: "Chrome", running: true, art: <><circle cx="12" cy="12" r="11" fill="#fbc116" /><path d="M12 12L2.500 6.500A11 11 0 0 1 21.500 6.500L12 7Z" fill="#e33b2e" /><path d="M2.500 6.500A11 11 0 0 0 11 23L16.500 14.500L12 12L7.500 14.500Z" fill="#2da94f" /><circle cx="12" cy="12" r="5.500" fill="#fff" /><circle cx="12" cy="12" r="4.300" fill="#3b7de8" /></> },
  { name: "Cubase", active: true, running: true, art: <g><rect width="24" height="24" fill="#1d6a99" /><path d="M13 3.500L4.500 12L13 20.500L15.500 18L12 14.500V9.500L15.500 6Z" fill="#fff" /><circle cx="17" cy="12" r="2.600" fill="#fff" /></g> },
  { name: "Levels", running: true, art: <><path d="M7.500 19V12M16.500 19V14" stroke="#c9b32c" strokeWidth="2" /><path d="M12 11V5" stroke="#e04b3a" strokeWidth="2" /><path d="M12 17V10" stroke="#e0a52d" strokeWidth="2" /><path d="M7.500 19V16M12 19V15M16.500 19V16M21 19V16" stroke="#2fc95a" strokeWidth="2" /></> },
  { name: "Splice", art: <><circle cx="12" cy="12" r="11.500" fill="#fff" /><path d="M15.500 5.500L9 9.500C7.500 11 8.500 13.500 10.500 13L15 9.500ZM8.500 18.500L15 14.500C16.500 13 15.500 10.500 13.500 11L9 14.500Z" fill="#222" /></> },
  { name: "WordPad", art: <><path d="M4 1H20V19L22 22H4Z" fill="#d7e9f7" /><path d="M4 1H20V4H4Z" fill="#4a90cc" /><path d="M4 16H17M4 19H17M14 7H19M14 10H19" stroke="#5b9bd5" /><text x="5" y="14" fontSize="11" fontWeight="700" fontFamily="Liberation Serif" fill="#ed7d14">A</text></> },
  { name: "Sphere", art: <><circle cx="12" cy="11" r="9.500" fill="#2868b5" /><ellipse cx="12" cy="6" rx="6.500" ry="3.500" fill="#a9d0f5" /><ellipse cx="12" cy="14" rx="7.500" ry="4.500" fill="#4a95e4" /></> },
  { name: "Finale", art: <><rect width="24" height="24" fill="#6b6b6b" /><path d="M0 0H24V12L0 14Z" fill="#7f7f7f" /><text x="12" y="22" fontSize="29" textAnchor="middle" fontFamily="Liberation Serif" fill="#fff">F</text></> },
  { name: "Grid", art: <g stroke="#3d8fb5" strokeWidth="2" strokeDasharray="2 1"><path d="M5 6H19M5 9H19M5 12H19M5 15H19M5 18H19" /></g> },
  { name: "EZdrummer", art: <><rect width="24" height="24" rx="1" fill="#e9650f" /><text x="12" y="15" fontSize="9" fontWeight="800" textAnchor="middle" fill="#fff">EZD</text></> },
  { name: "Drum tool", art: <><rect x="1" y="1" width="22" height="22" rx="3" fill="#1d5570" /><path d="M1 4Q1 1 4 1H20Q23 1 23 4V10H1Z" fill="#7d9eac" /><circle cx="12" cy="13" r="8" fill="#1d5570" stroke="#cfe6ef" strokeWidth="1.300" /><path d="M8 10V12M16 10V12M8 14V15M16 14V15M12 16V18M7 3L9 5M11 3L9 5M13 5L16 3M8 17L9 18M16 17L15 18" stroke="#cfe6ef" strokeWidth="1.300" /></> },
  { name: "Guitar", art: <><circle cx="12" cy="12" r="11" fill="#070707" stroke="#a87d38" strokeWidth="1.200" /><path d="M11 4L12 12M11 13H14L12.500 15.500C15 16 14 19 10.500 18.500" stroke="#b88d45" strokeWidth="1.200" /></> },
  { name: "Loader", art: <>{dots.map((a) => <circle key={a} cx={12 + 7 * Math.cos(a)} cy={12 + 7 * Math.sin(a)} r="0.900" fill="#7f8583" />)}</> },
  { name: "Earth Pro", art: <><circle cx="12" cy="12" r="11" fill="#7d8593" /><path d="M2 7C9 4 15 14 22.500 13M1 12C8 10 13 18 20 18M7 3C14 3 18 8 23 9" stroke="#e9edf2" strokeWidth="2.800" /><path d="M6 17H18V21Q12 25 6 21Z" fill="#222" /><text x="12" y="22" fontSize="6" textAnchor="middle" fill="#fff">Pro</text></> },
  { name: "Guitar Pro", art: <><circle cx="12" cy="12" r="10.500" fill="#2f86f0" stroke="#e8f2ff" /><path d="M12 21L6.500 11A6 6 0 1 1 17.500 11Z" fill="#fff" /><text x="12" y="11" fontSize="7" fontWeight="700" textAnchor="middle" fill="#2f6fc0">gp</text></> },
  { name: "Mini tool", art: <><path d="M10 1L19 10M20 18L12 22M5 2H2V8H5M5 16H2V23H5M2 19H5" stroke="#b9b9b9" strokeWidth="2" /><rect x="1" y="9" width="22" height="8" rx="1" fill="#d0151c" transform="rotate(6 12 12)" /><text x="12" y="15" fontSize="6" fontWeight="700" textAnchor="middle" fill="#fff">Mini-03</text></> },
  { name: "Snipping Tool", art: <><ellipse cx="11" cy="9" rx="10" ry="7" fill="#f2f2f2" stroke="#c92a2a" strokeWidth="2" transform="rotate(-20 11 9)" /><path d="M6 6L18 16M16 4L14 16" stroke="#999" /><circle cx="19" cy="18" r="3" stroke="#2c86c7" strokeWidth="2" /><circle cx="13.500" cy="20" r="2.500" stroke="#2c86c7" strokeWidth="2" /></> },
  { name: "Gold seal", art: <><rect width="24" height="24" fill="#3a3a32" /><circle cx="12" cy="12" r="9.500" fill="#151515" stroke="#e3c62f" strokeWidth="2.500" /><circle cx="12" cy="10.500" r="4.500" fill="#e6b975" /><path d="M6 18H18" stroke="#e3c62f" strokeWidth="2" /></> },
  { name: "Norton", art: <><rect width="24" height="24" rx="1" fill="#36495c" /><circle cx="12" cy="12.500" r="7" stroke="#f7b71d" strokeWidth="3" /><path d="M9 12L12 15L20 4" stroke="#fff" strokeWidth="2.200" /></> },
  { name: "Calculator", art: <><rect x="3" width="18" height="24" rx="1" fill="#7b8894" /><rect x="5" y="2" width="14" height="4" fill="#35c3f3" /><path d="M5 9H14M5 13H14M5 17H14M5 21H14" stroke="#dbe1e6" strokeWidth="2.800" strokeDasharray="4 1" /><path d="M17.500 8V12" stroke="#dbe1e6" strokeWidth="3" /><path d="M17.500 13V22.500" stroke="#12539a" strokeWidth="3" /></> },
  { name: "Ozone", art: <><rect width="24" height="24" fill="#050505" /><circle cx="12" cy="12" r="9.500" stroke="#fff" strokeWidth="2.400" /><path d="M5 13H8C12 13 10 7 14 7H18M6 17H10C14 17 13 11 17 11H20" stroke="#fff" strokeWidth="2" /></> },
  { name: "Guitar app", art: <><rect x="1" width="22" height="23" rx="4" fill="#fb930d" /><path d="M5 7C10 3 15 3 19 6C20 13 17 18 14 20C8 17 6 13 5 7Z" stroke="#2d1600" strokeWidth="1.300" /><text x="12.500" y="12" fontSize="6" fontWeight="700" textAnchor="middle" fill="#2d1600">BT</text></> },
  { name: "Office", art: <><path d="M3 6L14 1L21 3V21L14 23L5 19L14 20V5L8 7V17L3 19Z" fill="#e23d12" /><path d="M3 6L8 4V17L3 19Z" fill="#c2265c" /></> },
  { name: "Mail", art: <><path d="M0 9L12 1L24 9V23H0Z" fill="#1277c9" /><path d="M3 8H21V16H3Z" fill="#fff" /><path d="M0 9L12 17L24 9V23H0Z" fill="#31aef0" /></> },
  { name: "Live", art: <><rect x="1" y="1" width="22" height="22" fill="#fbf166" /><text x="12" y="15.500" fontSize="9" fontWeight="700" textAnchor="middle" fill="#111">Live</text></> },
  { name: "Photos", art: <><rect x="1" y="1" width="22" height="22" fill="#2b9fe6" /><path d="M1 19L9 9L21 23H1Z" fill="#123f86" /><path d="M12 13L15 10L23 18V23H20Z" fill="#1d68bb" /><circle cx="17" cy="6" r="2" fill="#fff" /></> },
  { name: "Molecule", art: <><path d="M12 12L17 4M12 12L4 15M12 12L20 15M12 12L9 21" stroke="#ccc" strokeWidth="1.500" /><circle cx="12" cy="12" r="4.500" fill="#cf2f24" /><g fill="#b4b4b4"><circle cx="17" cy="4" r="2.500" /><circle cx="4" cy="14" r="3" /><circle cx="20" cy="15" r="3" /><circle cx="8" cy="20" r="2.500" /><circle cx="15" cy="20" r="2.500" /></g></> },
  { name: "Edge", running: true, art: <><circle cx="12" cy="12" r="11" fill="#1671c7" /><path d="M1 11C2 2 11 -1 18 3C23 6 24 12 21 14C18 16 14 15 14 13C15 8 7 5 1 11Z" fill="#37c6b4" /><path d="M14 3C22 3 25 10 21 14C18 16 14 15 14 13C15 10 13 7 9 7Z" fill="#58d36c" /><path d="M9 12C8 18 14 21 21 18C17 25 5 24 4 15C5 12 8 11 9 12Z" fill="#0d4f9c" /><path d="M10 12C11 10 13 11 14 13C14 15 17 17 21 15V17C15 21 9 18 10 12Z" fill="#1d1d1d" /></> },
];

const Taskbar = () => (
  <footer className="flex h-10 items-stretch bg-[#1e1e1e] text-white">
    <button aria-label="Start" className="flex w-12 items-center justify-center">
      <svg viewBox="0 0 16 16" className="h-4 w-4 fill-white"><path d="M0 2.300L6.600 1.400V7.600H0ZM7.400 1.300L16 0V7.600H7.400ZM0 8.400H6.600V14.600L0 13.700ZM7.400 8.400H16V16L7.400 14.700Z" /></svg>
    </button>
    <label className="flex w-[344px] items-center gap-3 border border-[#6a6a6a] bg-[#434343] pl-[11px]">
      <Search size={17} strokeWidth={1.5} className="shrink-0 -scale-x-100" />
      <input aria-label="Search" placeholder="Type here to search" className="w-full bg-transparent text-[14px] text-white placeholder-[#d8d8d8] outline-none" />
    </label>
    <button aria-label="Cortana" className="flex w-12 items-center justify-center"><span className="h-4 w-4 rounded-full border-2 border-white" /></button>
    <button aria-label="Task view" className="flex w-[50px] items-center justify-center">
      <Ico className="h-4 w-4" box="0 0 16 16"><path d="M.5 1V3.500H10.500V1M.5 15V12.500H10.500V15M1 5.500H10.500V10.500H1ZM13.500 1V3M13.500 9.500V15" strokeWidth="1.200" /><rect x="12.500" y="5" width="2.500" height="2.500" fill="currentColor" stroke="none" /></Ico>
    </button>
    <div className="ml-[2px] flex flex-1">
      {apps.map((a) => (
        <button key={a.name} aria-label={a.name} className={`flex min-w-0 flex-1 flex-col items-center justify-end ${a.active ? "bg-[#3a3a3a]" : ""}`}>
          <svg viewBox="0 0 24 24" className="mb-[6px] h-6 w-6" fill="none" fontFamily="Open Sans" aria-hidden="true">{a.art}</svg>
          <span className={`h-[2px] w-8 ${a.running ? "bg-[#b5b5b5]" : ""}`} />
        </button>
      ))}
    </div>
    <div className="flex items-center">
      <button aria-label="Hidden icons" className="ml-[6px]"><ChevronUp size={17} strokeWidth={1.5} /></button>
      <svg viewBox="0 0 18 18" className="ml-[7px] h-4 w-4" fill="none"><circle cx="8" cy="9" r="6" stroke="#f7b71d" strokeWidth="2.500" /><path d="M6 8L8 10L14 2" stroke="#fff" strokeWidth="1.500" /><circle cx="13" cy="13" r="4.500" fill="#2ca83e" /><path d="M11 13L12.500 14.500L15 11.500" stroke="#fff" /></svg>
      <Wifi size={17} strokeWidth={1.5} className="ml-[8px] rotate-[-40deg]" />
      <Volume2 size={18} strokeWidth={1.3} className="ml-[7px]" />
      <Ico className="ml-[10px] h-[18px] w-[18px]"><path d="M3 12C1 14 2 18 5 17C9 15 12 8 14 3C16 0 17 4 14 7L9 13C7 17 11 17 12 14C13 11 15 12 18 9" strokeWidth="1.300" /></Ico>
      <time className="ml-[12px] w-[60px] text-center text-[11px] leading-[18px]">06:21<br />07/04/2022</time>
      <button aria-label="Notifications" className="ml-[17px]"><svg viewBox="0 0 16 16" className="h-4 w-4"><path d="M0 0H16V12H10L8 15L6 12H0Z" fill="#fff" /><path d="M3 3.500H13M3 6H13M3 8.500H9" stroke="#1e1e1e" /></svg></button>
      <span className="ml-[19px] mr-1 h-10 w-px bg-[#5a5a5a]" />
    </div>
  </footer>
);

export default function App() {
  return (
    <div className="flex min-h-screen flex-col bg-[#25292c] font-['Open_Sans','Noto_Sans',sans-serif]">
      <TitleBar />
      <Toolbar />
      <InfoLine />
      <Overview />
      <div className="flex flex-1">
        <Inspector />
        <Editor />
        <Regions />
      </div>
      <Taskbar />
    </div>
  );
}
